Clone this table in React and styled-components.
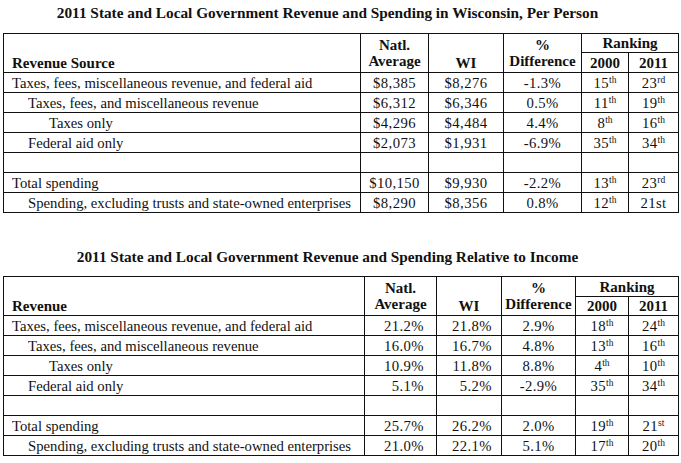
import React from 'react'
import styled, { createGlobalStyle } from 'styled-components'

const Global = createGlobalStyle`
  body {
    margin: 0;
    background: #fff;
    font-family: "Liberation Serif", "Times New Roman", serif;
    color: #111;
  }
`

const Page = styled.div`
  width: 681px;
  padding: 0 3px;
  box-sizing: border-box;
`

const Title = styled.h2`
  margin: ${p => p.$top}px 0 0;
  padding: 3px 26px ${p => p.$gap}px 0;
  font-size: 15.3px;
  line-height: 20px;
  font-weight: bold;
  text-align: center;
`

const Table = styled.table`
  width: 675px;
  border-collapse: collapse;
  table-layout: fixed;
  font-size: 14.7px;

  td, th {
    border: 1px solid #111;
    padding: 0 4px;
    height: ${p => p.$row}px;
    line-height: 16px;
    white-space: nowrap;
    overflow: hidden;
  }
`

const Head = styled.th`
  font-weight: bold;
  font-size: 15px;
  text-align: ${p => p.$left ? 'left' : 'center'};
  vertical-align: ${p => p.$bottom ? 'bottom' : 'middle'};
  th& {
    height: ${p => p.$h || 18}px;
    padding-left: ${p => p.$left ? 8 : 2}px;
    padding-right: 2px;
    padding-bottom: ${p => p.$bottom ? 1 : 0}px;
  }
`

const Label = styled.td`
  text-align: left;
  td& { padding-left: ${p => 8 + [0, 16, 37][p.$level]}px; }
`

const Value = styled.td`
  text-align: ${p => p.$pad ? 'right' : 'center'};
  letter-spacing: 0.4px;
  td& { padding-right: ${p => p.$pad || 4}px; }
`

const Sup = styled.sup`
  font-size: 9.5px;
  letter-spacing: 0;
  vertical-align: 5px;
  line-height: 0;
`

const Rank = ({ v }) => {
  const m = v.match(/^(\d+)(st|nd|rd|th)(!?)$/)
  if (!m || m[3]) return <>{v.replace('!', '')}</>
  return <>{m[1]}<Sup>{m[2]}</Sup></>
}

const perPerson = [
  ['Taxes, fees, miscellaneous revenue, and federal aid', 0, '$8,385', '$8,276', '-1.3%', '15th', '23rd'],
  ['Taxes, fees, and miscellaneous revenue', 1, '$6,312', '$6,346', '0.5%', '11th', '19th'],
  ['Taxes only', 2, '$4,296', '$4,484', '4.4%', '8th', '16th'],
  ['Federal aid only', 1, '$2,073', '$1,931', '-6.9%', '35th', '34th'],
  null,
  ['Total spending', 0, '$10,150', '$9,930', '-2.2%', '13th', '23rd'],
  ['Spending, excluding trusts and state-owned enterprises', 1, '$8,290', '$8,356', '0.8%', '12th', '21st!'],
]

const relIncome = [
  ['Taxes, fees, miscellaneous revenue, and federal aid', 0, '21.2%', '21.8%', '2.9%', '18th', '24th'],
  ['Taxes, fees, and miscellaneous revenue', 1, '16.0%', '16.7%', '4.8%', '13th', '16th'],
  ['Taxes only', 2, '10.9%', '11.8%', '8.8%', '4th', '10th'],
  ['Federal aid only', 1, '5.1%', '5.2%', '-2.9%', '35th', '34th'],
  null,
  ['Total spending', 0, '25.7%', '26.2%', '2.0%', '19th', '21st'],
  ['Spending, excluding trusts and state-owned enterprises', 1, '21.0%', '22.1%', '5.1%', '17th', '20th'],
]

const DataTable = ({ first, rows, cols, pads = [], row, heads }) => (
  <Table $row={row}>
    <colgroup>
      {cols.map((w, i) => <col key={i} style={{ width: w }} />)}
    </colgroup>
    <thead>
      <tr>
        <Head rowSpan={2} $left $bottom>{first}</Head>
        <Head rowSpan={2}>Natl.<br />Average</Head>
        <Head rowSpan={2} $bottom>WI</Head>
        <Head rowSpan={2}>%<br />Difference</Head>
        <Head colSpan={2} $h={heads[0]}>Ranking</Head>
      </tr>
      <tr>
        <Head $h={heads[1]}>2000</Head>
        <Head $h={heads[1]}>2011</Head>
      </tr>
    </thead>
    <tbody>
      {rows.map((r, i) => r ? (
        <tr key={i}>
          <Label $level={r[1]}>{r[0]}</Label>
          <Value $pad={pads[0]}>{r[2]}</Value>
          <Value $pad={pads[1]}>{r[3]}</Value>
          <Value>{r[4]}</Value>
          <Value><Rank v={r[5]} /></Value>
          <Value><Rank v={r[6]} /></Value>
        </tr>
      ) : (
        <tr key={i}>
          <Label $level={0} />
          <Value /><Value /><Value /><Value /><Value />
        </tr>
      ))}
    </tbody>
  </Table>
)

export default function App() {
  return (
    <Page>
      <Global />
      <Title $top={0} $gap={10}>
        2011 State and Local Government Revenue and Spending in Wisconsin, Per Person
      </Title>
      <DataTable
        first="Revenue Source"
        rows={perPerson}
        cols={[357, 68, 75, 78, 47, 50]}
        row={19}
        heads={[18, 19]}
      />
      <Title $top={31} $gap={9}>
        2011 State and Local Government Revenue and Spending Relative to Income
      </Title>
      <DataTable
        first="Revenue"
        rows={relIncome}
        cols={[361, 72, 65, 74, 53, 50]}
        pads={[12, 9]}
        row={19}
        heads={[19, 18]}
      />
    </Page>
  )
}
